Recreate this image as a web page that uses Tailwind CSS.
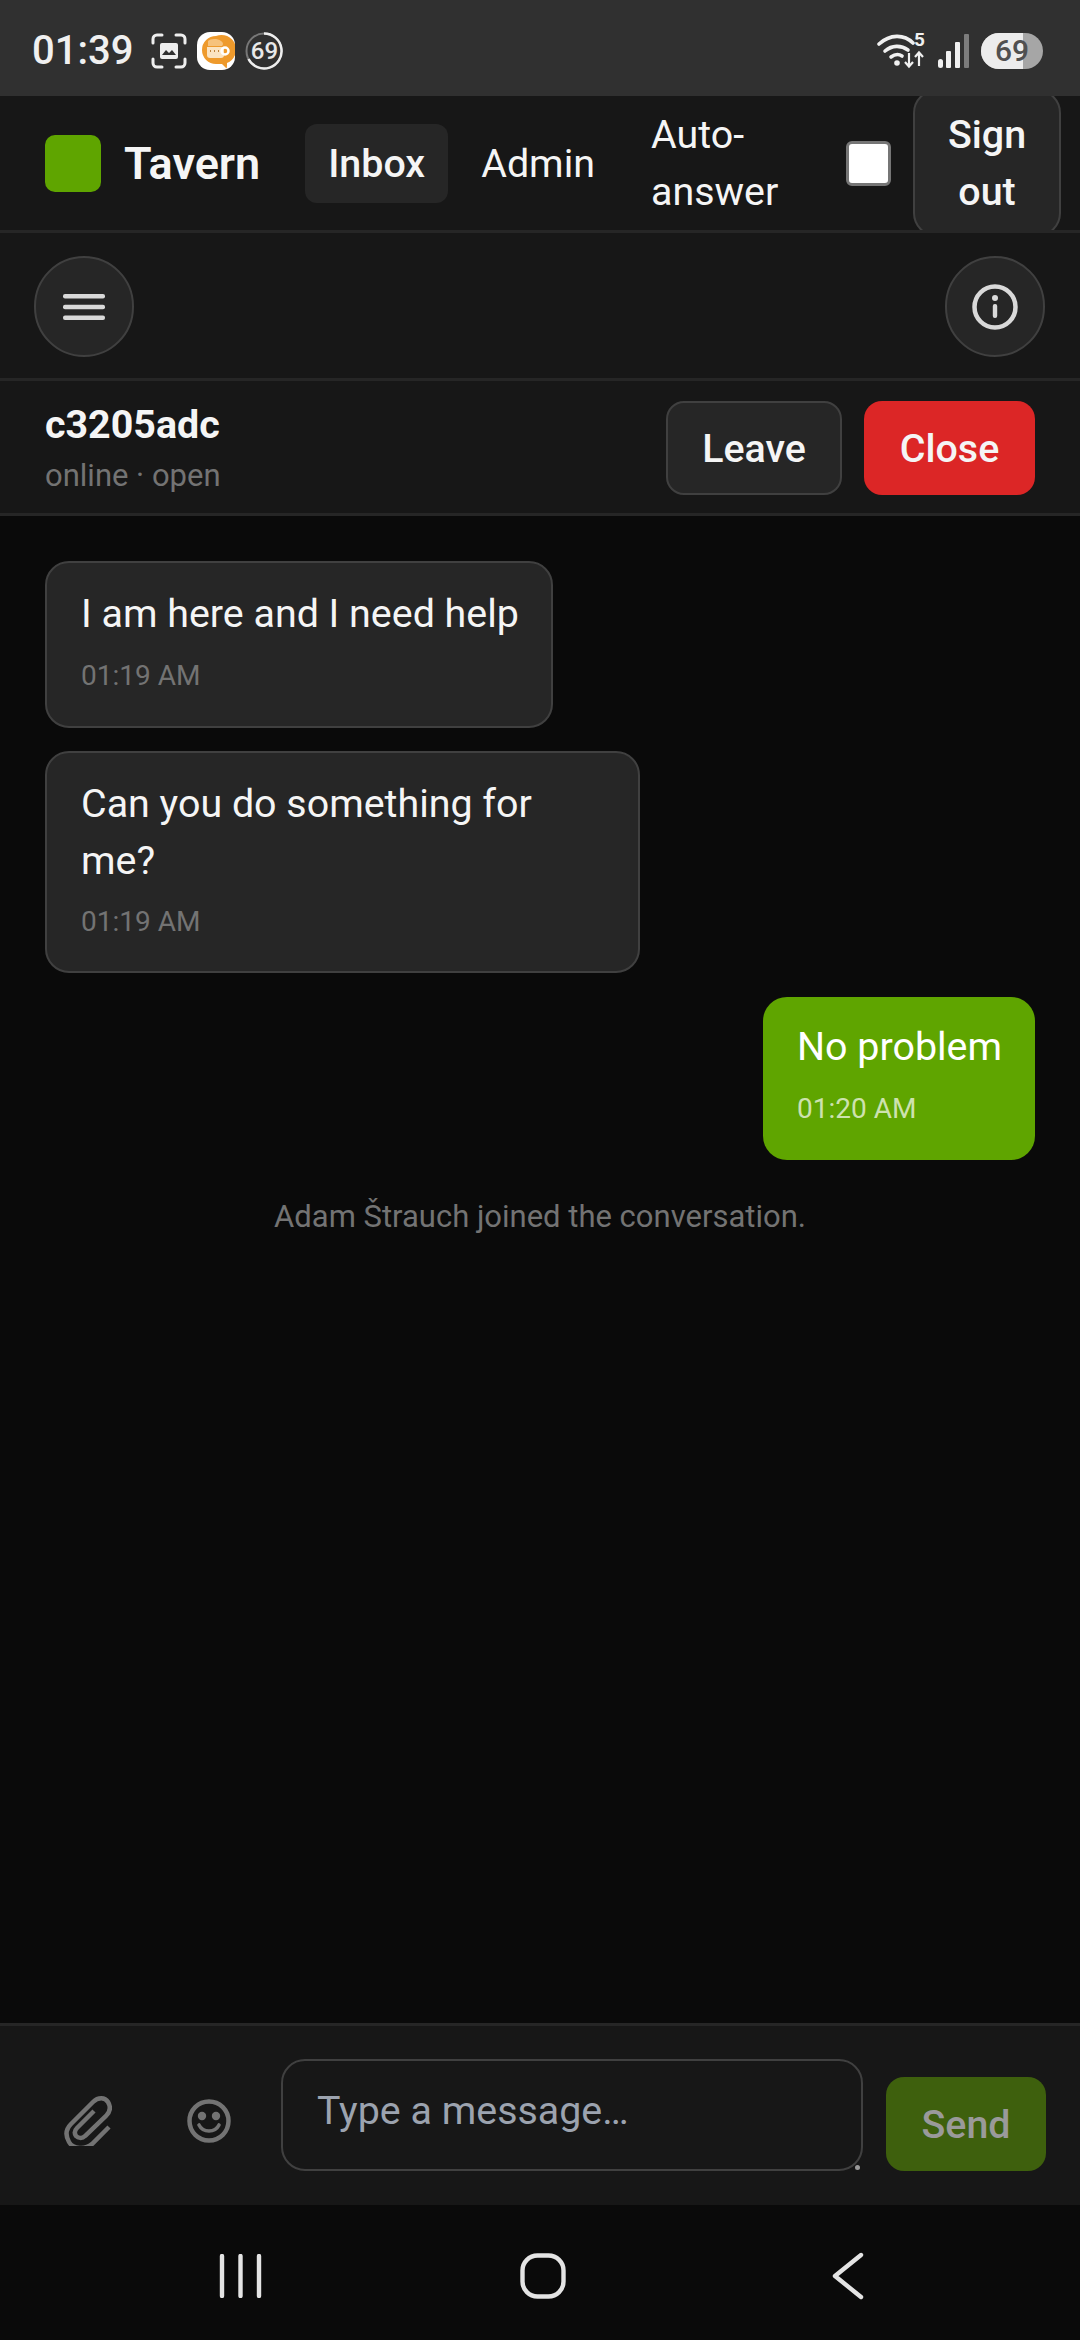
<!DOCTYPE html>
<html lang="en">
<head>
    <meta charset="UTF-8">
    <meta name="viewport" content="width=device-width, initial-scale=1.0">
    <title>Tavern</title>
    <script src="https://cdn.jsdelivr.net/npm/@tailwindcss/browser@4"></script>
</head>
<body class="bg-[#0a0a0a]">
    <div class="flex flex-col w-[1080px] h-[2340px] overflow-hidden font-['Roboto',sans-serif] text-[39.4px] leading-[57px] text-[#f5f5f5]">

        <!-- Status bar -->
        <div class="relative z-10 flex items-center shrink-0 h-[96px] pt-[6px] pl-[32px] pr-[37px] bg-[#303030]">
            <span class="text-[40px] leading-[40px] font-medium text-[#f0f0f0]">01:39</span>
            <svg class="ml-[18px]" width="36" height="36" viewBox="0 0 36 36" fill="none">
                <path d="M2 10V6a4 4 0 0 1 4-4h5M25 2h5a4 4 0 0 1 4 4v4M34 26v4a4 4 0 0 1-4 4h-5M11 34H6a4 4 0 0 1-4-4v-4" stroke="#eee" stroke-width="3" stroke-linecap="round"/>
                <rect x="9" y="10" width="18" height="16" rx="2" fill="#eee"/>
                <path d="M11 22l4-5 3 3 3-3 4 5z" fill="#303030"/>
            </svg>
            <svg class="ml-[10px]" width="38" height="38" viewBox="0 0 38 38">
                <rect width="38" height="38" rx="13" fill="#fff"/>
                <path d="M19 4a14 14 0 0 0 0 28c3 0 4 0 6 0l4 4c1 1 1-1 1-5a14 14 0 0 0-11-27z" fill="#ee9a2c"/>
                <path d="M11 9c2-2 9-3 13 0 3 2 2 4 1 5H11z" fill="#f6c27c"/>
                <path d="M10 15h17v8a3 3 0 0 1-3 3H13a3 3 0 0 1-3-3z" fill="#fbe3c0"/>
                <circle cx="28" cy="19" r="3.5" fill="none" stroke="#fff" stroke-width="2.5"/>
                <path d="M13 19h1M17 19h1M21 19h1" stroke="#a9620f" stroke-width="1.5"/>
            </svg>
            <div class="relative flex items-center justify-center ml-[10px] w-[38px] h-[38px]">
                <svg class="absolute inset-0" width="38" height="38" viewBox="0 0 38 38" fill="none">
                    <circle cx="19" cy="19" r="17.5" stroke="#777" stroke-width="2"/>
                    <path d="M19 1.5A17.5 17.5 0 1 1 3.5 27" stroke="#eee" stroke-width="2.5"/>
                </svg>
                <span class="text-[24px] leading-[24px] font-medium text-[#e8e8e8]">69</span>
            </div>

            <div class="relative ml-auto w-[48px] h-[36px]">
                <svg width="48" height="36" viewBox="0 0 48 36" fill="none">
                    <path d="M2 11C13 1 27 1 36 10" stroke="#f0f0f0" stroke-width="3.6" stroke-linecap="round"/>
                    <path d="M8 18c7-6 16-6 23-1" stroke="#f0f0f0" stroke-width="3.6" stroke-linecap="round"/>
                    <path d="M14 24c4-3 8-3 11-1" stroke="#f0f0f0" stroke-width="3.6" stroke-linecap="round"/>
                    <circle cx="20" cy="30" r="2.8" fill="#f0f0f0"/>
                    <path d="M32 20v13M28 29l4 4.5 4-4.5M42 33V20M38 24l4-4.5 4 4.5" stroke="#f0f0f0" stroke-width="2.2"/>
                </svg>
                <span class="absolute right-0 top-[-3px] text-[19px] leading-[20px] font-bold text-[#f0f0f0]">5</span>
            </div>
            <svg class="ml-[12px]" width="32" height="36" viewBox="0 0 32 36">
                <rect x="1" y="26" width="5" height="9" rx="2.5" fill="#f0f0f0"/>
                <rect x="9" y="18" width="5" height="17" rx="1" fill="#f0f0f0"/>
                <rect x="18" y="9" width="5" height="26" rx="1" fill="#f0f0f0"/>
                <rect x="27" y="1" width="5" height="34" rx="1" fill="#7c7c7c"/>
            </svg>
            <div class="relative flex items-center justify-center ml-[12px] w-[62px] h-[36px] rounded-full overflow-hidden bg-[#a6a6a6]">
                <div class="absolute left-0 top-0 bottom-0 w-[42px] bg-[#ececec]"></div>
                <span class="relative text-[30px] leading-[36px] font-medium text-[#505050]">69</span>
            </div>
        </div>

        <!-- Top nav -->
        <nav class="flex items-center shrink-0 h-[137px] pl-[45px] overflow-hidden bg-[#171717] border-b-[3px] border-[#262626]">
            <div class="shrink-0 w-[56px] h-[57px] rounded-[10px] bg-[#5fa500]"></div>
            <span class="ml-[23px] text-[45px] font-semibold">Tavern</span>
            <a class="ml-[45px] flex items-center h-[79px] px-[23px] rounded-[12px] bg-[#262626] font-medium">Inbox</a>
            <a class="ml-[33px] text-[#f5f5f5]">Admin</a>
            <span class="ml-[56px] w-[130px]">Auto-answer</span>
            <div class="ml-[65px] shrink-0 w-[45px] h-[45px] rounded-[6px] bg-white border-[3px] border-[#767676]"></div>
            <button class="ml-[22px] shrink-0 w-[148px] h-[148px] rounded-[24px] bg-[#262626] border-[2px] border-[#404040] font-medium text-center">Sign<br>out</button>
        </nav>

        <!-- Sidebar / info toggles -->
        <div class="flex items-center justify-between shrink-0 h-[148px] pl-[34px] pr-[35px] bg-[#171717] border-b-[3px] border-[#262626]">
            <button class="flex items-center justify-center mt-[2px] w-[100px] h-[101px] rounded-full bg-[#262626] border-[2px] border-[#404040]">
                <svg width="42" height="28" viewBox="0 0 42 28" fill="#d9d9d9">
                    <rect y="1" width="42" height="4.4" rx="2"/>
                    <rect y="11.8" width="42" height="4.4" rx="2"/>
                    <rect y="22.6" width="42" height="4.4" rx="2"/>
                </svg>
            </button>
            <button class="flex items-center justify-center mt-[2px] w-[100px] h-[101px] rounded-full bg-[#262626] border-[2px] border-[#404040]">
                <svg width="46" height="46" viewBox="0 0 46 46" fill="none">
                    <circle cx="23" cy="23" r="20.5" stroke="#d9d9d9" stroke-width="4.5"/>
                    <circle cx="23" cy="14" r="3" fill="#d9d9d9"/>
                    <rect x="20.8" y="20" width="4.4" height="14" rx="2" fill="#d9d9d9"/>
                </svg>
            </button>
        </div>

        <!-- Conversation header -->
        <div class="flex items-center justify-between shrink-0 h-[135px] px-[45px] bg-[#171717] border-b-[3px] border-[#262626]">
            <div class="flex flex-col">
                <span class="leading-[57px] font-bold">c3205adc</span>
                <span class="text-[31px] leading-[45px] text-[#737373]">online · open</span>
            </div>
            <div class="flex items-center gap-[22px] mt-[2px]">
                <button class="w-[176px] h-[94px] rounded-[18px] bg-[#262626] border-[2px] border-[#404040] font-medium">Leave</button>
                <button class="w-[171px] h-[94px] rounded-[18px] bg-[#dc2626] font-medium">Close</button>
            </div>
        </div>

        <!-- Messages -->
        <main class="flex flex-col flex-1 px-[45px] pt-[45px] bg-[#0a0a0a]">
            <div class="self-start w-[508px] h-[167px] pt-[22px] px-[34px] rounded-[24px] bg-[#262626] border-[2px] border-[#404040]">
                <p class="whitespace-nowrap">I am here and I need help</p>
                <p class="mt-[11px] text-[28px] leading-[45px] text-[#737373]">01:19 AM</p>
            </div>
            <div class="self-start mt-[23px] w-[595px] h-[222px] pt-[22px] px-[34px] rounded-[24px] bg-[#262626] border-[2px] border-[#404040]">
                <p>Can you do something for me?</p>
                <p class="mt-[10px] text-[28px] leading-[45px] text-[#737373]">01:19 AM</p>
            </div>
            <div class="self-end mt-[24px] w-[272px] h-[163px] pt-[21px] px-[34px] rounded-[24px] bg-[#5fa500] text-white">
                <p class="whitespace-nowrap">No problem</p>
                <p class="mt-[11px] text-[28px] leading-[45px] text-white/70">01:20 AM</p>
            </div>
            <p class="mt-[34px] text-center text-[31px] leading-[45px] text-[#737373]">Adam Štrauch joined the conversation.</p>
        </main>

        <!-- Composer -->
        <div class="flex items-start shrink-0 h-[182px] pl-[64px] bg-[#171717] border-t-[3px] border-[#262626]">
            <svg class="mt-[69px] shrink-0" width="48" height="51" viewBox="0 0 48 51" fill="none" stroke="#737373" stroke-width="4.5">
                <path d="M45 32L28 49C21 55 9 54 5 47C1 40 2 34 7 29L29 7C34 2 41 2 44 7C47 12 46 17 42 21L21 41C18 44 14 43 12 41C10 38 11 35 13 33L30 16"/>
            </svg>
            <svg class="mt-[73px] ml-[75px] shrink-0" width="44" height="44" viewBox="0 0 44 44" fill="none">
                <circle cx="22" cy="22" r="19.5" stroke="#737373" stroke-width="4.5"/>
                <circle cx="15" cy="17" r="4.2" fill="#737373"/>
                <circle cx="29" cy="17" r="4.2" fill="#737373"/>
                <path d="M12 26c4 8 16 8 20 0" stroke="#737373" stroke-width="3.6" stroke-linecap="round"/>
            </svg>
            <div class="relative mt-[33px] ml-[50px] w-[582px] h-[112px] pt-[21px] px-[34px] rounded-[24px] bg-[#171717] border-[2px] border-[#404040] text-[#9ca3af]">
                Type a message…
                <span class="absolute right-[1px] bottom-[-1px] w-[5px] h-[5px] rounded-full bg-[#9a9a9a]"></span>
            </div>
            <button class="mt-[51px] ml-[23px] w-[160px] h-[94px] rounded-[18px] bg-[#3e600d] font-medium text-[#9a9a9a]">Send</button>
        </div>

        <!-- Android navigation bar -->
        <div class="flex items-center shrink-0 h-[135px] pt-[6px] bg-[#0a0a0a]">
            <svg class="ml-[218px] shrink-0" width="46" height="44" viewBox="0 0 46 44" stroke="#e4e4e4" stroke-width="4.4" stroke-linecap="round">
                <path d="M4 2v40M22.5 2v40M41 2v40"/>
            </svg>
            <svg class="ml-[256px] shrink-0" width="46" height="46" viewBox="0 0 46 46" fill="none" stroke="#e4e4e4" stroke-width="4.4">
                <rect x="2.5" y="2.5" width="41" height="41" rx="15"/>
            </svg>
            <svg class="ml-[266px] shrink-0" width="32" height="48" viewBox="0 0 32 48" fill="none" stroke="#e4e4e4" stroke-width="4.4" stroke-linecap="round" stroke-linejoin="round">
                <path d="M29 3L3 24L29 45"/>
            </svg>
        </div>
    </div>
</body>
</html>
